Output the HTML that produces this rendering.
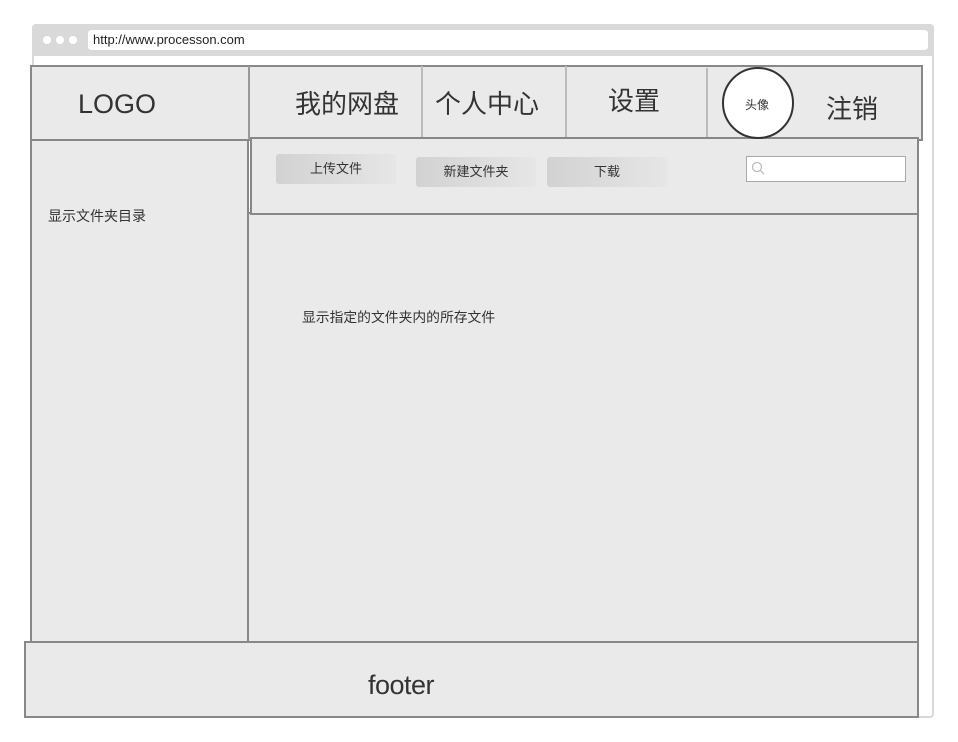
<!DOCTYPE html>
<html><head><meta charset="utf-8"><style>
body{margin:0;width:958px;height:742px;background:#fff;position:relative;overflow:hidden;font-family:"Liberation Sans","Noto Sans CJK SC",sans-serif;color:#333}
.a{position:absolute;box-sizing:border-box}
.box{background:#eaeaea;border:2px solid #888}
.t{position:absolute;white-space:nowrap}
.btn{position:absolute;height:30px;border-radius:3px;background:linear-gradient(90deg,#d2d2d2,#e6e6e6);font-size:13px;text-align:center;line-height:30px;color:#333}
</style></head><body>
<div class="a" style="left:32px;top:24px;width:902px;height:694px;border:2px solid #d9d9d9;border-radius:4px;background:#fff"></div>
<div class="a" style="left:32px;top:24px;width:902px;height:32px;background:#d9d9d9;border-radius:4px 4px 0 0"></div>
<div class="a" style="left:43px;top:36px;width:8px;height:8px;border-radius:50%;background:#fff"></div>
<div class="a" style="left:56px;top:36px;width:8px;height:8px;border-radius:50%;background:#fff"></div>
<div class="a" style="left:69px;top:36px;width:8px;height:8px;border-radius:50%;background:#fff"></div>
<div class="a" style="left:88px;top:30px;width:840px;height:20px;background:#fff;border-radius:3px"></div>
<div class="t" style="left:93px;top:32px;font-size:13px;color:#222">http://www.processon.com</div>

<div class="a box" style="left:30px;top:65px;width:893px;height:76px"></div>
<div class="a" style="left:248px;top:66px;width:2px;height:74px;background:#999"></div>
<div class="a" style="left:421px;top:66px;width:2px;height:72px;background:#bbb"></div>
<div class="a" style="left:565px;top:66px;width:2px;height:72px;background:#bbb"></div>
<div class="a" style="left:706px;top:68px;width:2px;height:70px;background:#bbb"></div>
<div class="t" style="left:78px;top:89px;font-size:27px">LOGO</div>
<div class="t" style="left:295px;top:84px;font-size:26px">我的网盘</div>
<div class="t" style="left:435px;top:84px;font-size:26px">个人中心</div>
<div class="t" style="left:608px;top:81px;font-size:26px">设置</div>
<div class="t" style="left:826px;top:89px;font-size:26px">注销</div>

<div class="a box" style="left:30px;top:139px;width:219px;height:504px"></div>
<div class="t" style="left:48px;top:206px;font-size:14px">显示文件夹目录</div>

<div class="a box" style="left:247px;top:212px;width:672px;height:431px"></div>
<div class="t" style="left:302px;top:306px;font-size:13.8px">显示指定的文件夹内的所存文件</div>

<div class="a box" style="left:250px;top:137px;width:669px;height:78px"></div>
<div class="btn" style="left:276px;top:154px;width:120px">上传文件</div>
<div class="btn" style="left:416px;top:157px;width:120px">新建文件夹</div>
<div class="btn" style="left:547px;top:157px;width:120px">下载</div>
<div class="a" style="left:746px;top:156px;width:160px;height:26px;background:#fff;border:1px solid #aaa"></div>
<svg class="a" style="left:751px;top:161px" width="14" height="14"><circle cx="6" cy="6" r="4.5" fill="none" stroke="#bbb" stroke-width="1.3"/><line x1="9.3" y1="9.3" x2="13" y2="13" stroke="#bbb" stroke-width="1.3"/></svg>

<div class="a" style="left:722px;top:67px;width:72px;height:72px;border-radius:50%;background:#fff;border:2px solid #333"></div>
<div class="t" style="left:745px;top:96px;font-size:12px">头像</div>

<div class="a box" style="left:24px;top:641px;width:895px;height:77px"></div>
<div class="t" style="left:368px;top:670px;font-size:27px;letter-spacing:-0.5px">footer</div>
</body></html>
